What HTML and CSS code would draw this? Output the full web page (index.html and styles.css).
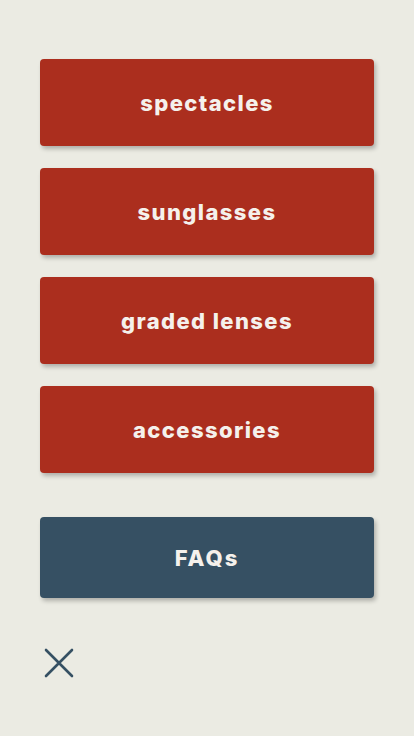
FILE: index.html
```html
<!DOCTYPE html>
<html lang="en">
<head>
  <meta charset="UTF-8">
  <title>Menu</title>
  <meta name="viewport" content="width=device-width, initial-scale=1.0">
  <link rel="stylesheet" href="styles.css">
</head>
<body>

  <nav class="menu">
    <a class="menu-btn" href="#">spectacles</a>
    <a class="menu-btn" href="#">sunglasses</a>
    <a class="menu-btn" href="#">graded lenses</a>
    <a class="menu-btn" href="#">accessories</a>
    <a class="menu-btn faq" href="#">FAQs</a>
  </nav>

  <button class="close-btn" aria-label="close">
    <svg width="30" height="30" viewBox="0 0 30 30">
      <path d="M2 2 L28 28 M28 2 L2 28" stroke="#355063" stroke-width="2.6" stroke-linecap="round" fill="none"/>
    </svg>
  </button>

</body>
</html>
```

FILE: styles.css
```css
body {
  margin: 0;
  background: #ebebe3;
  font-family: Inter, "Open Sans", sans-serif;
  padding: 59px 40px 0;
}

.menu {
  display: flex;
  flex-direction: column;
  gap: 22px;
}

.menu-btn {
  display: flex;
  align-items: center;
  justify-content: center;
  height: 87px;
  background: #ab2e1e;
  color: #f5f1ec;
  font-size: 22px;
  font-weight: 800;
  letter-spacing: 1.4px;
  text-decoration: none;
  border-radius: 4px;
  box-shadow: 2px 3px 4px rgba(0, 0, 0, 0.25);
}

.menu-btn.faq {
  margin-top: 22px;
  height: 81px;
  background: #365063;
  letter-spacing: 2px;
}

.close-btn {
  display: block;
  margin: 50px 0 0 4px;
  padding: 0;
  border: none;
  background: none;
  cursor: pointer;
}
```
